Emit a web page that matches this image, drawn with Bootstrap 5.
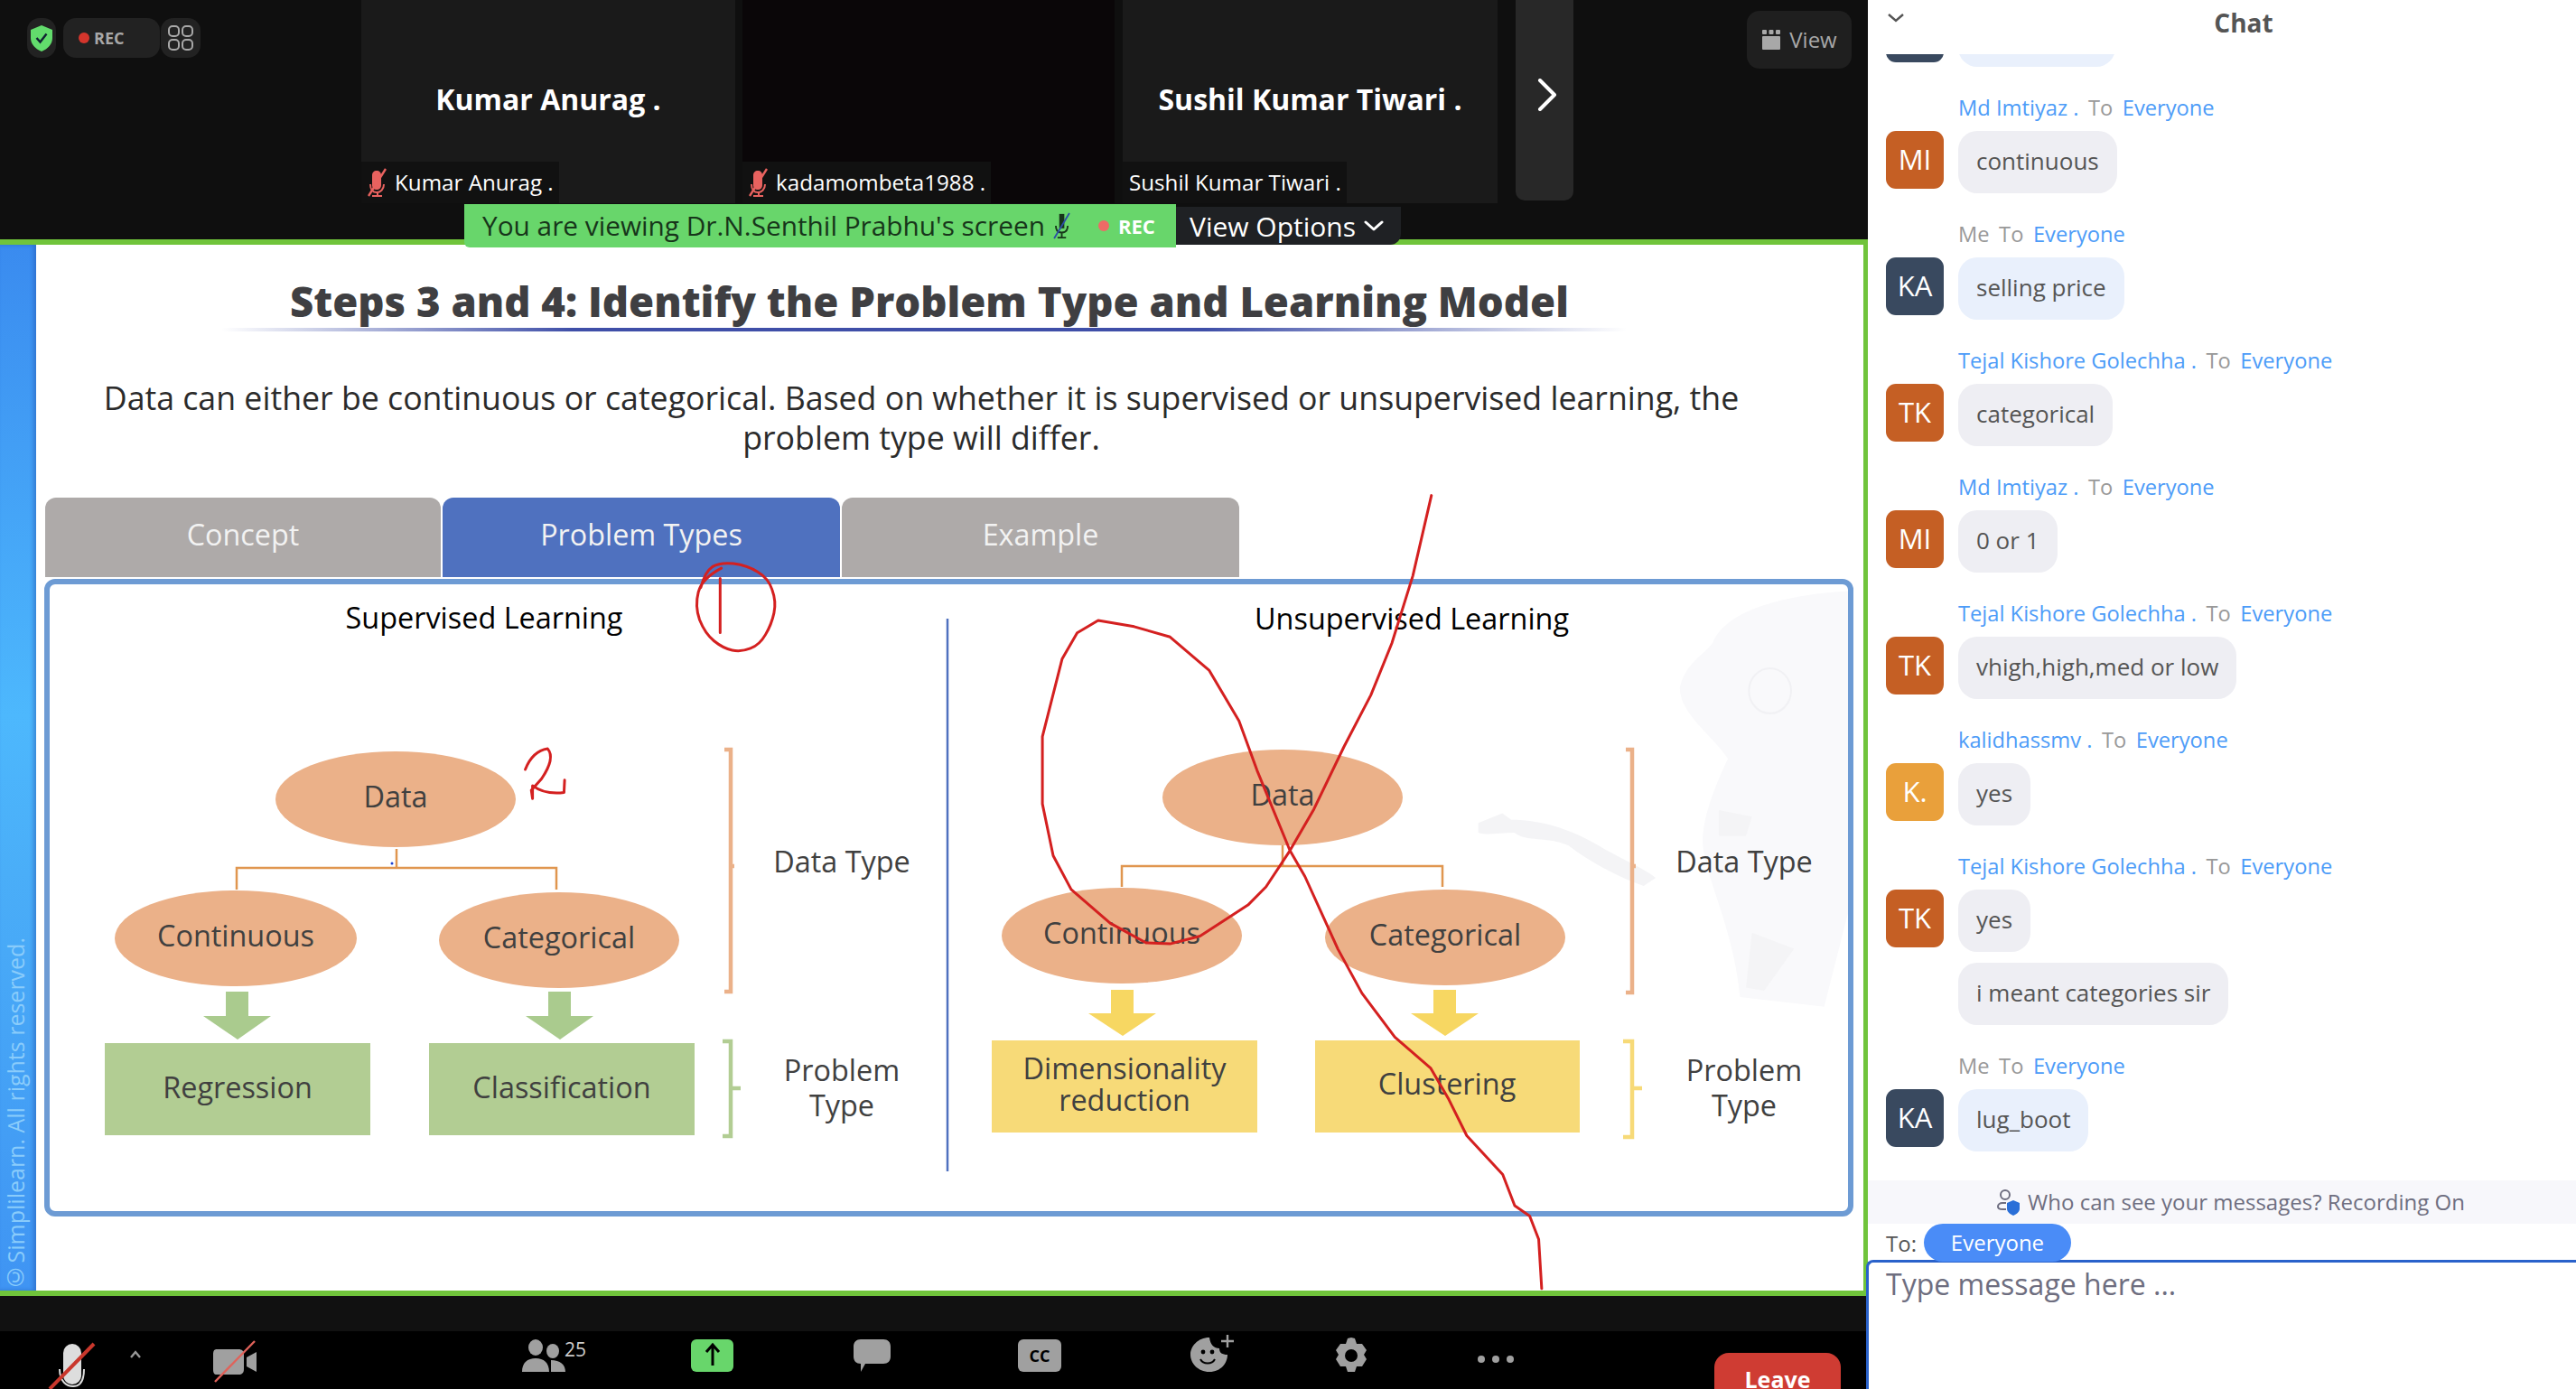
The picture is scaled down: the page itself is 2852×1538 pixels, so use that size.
<!DOCTYPE html>
<html lang="en">
<head>
    <meta charset="UTF-8">
    <meta name="viewport" content="width=device-width, initial-scale=1.0">
    <title>Meeting</title>
    <link href="https://cdn.jsdelivr.net/npm/bootstrap@5.3.3/dist/css/bootstrap.min.css" rel="stylesheet">
    <style>
        html, body { height: 100%; }
        body { font-family: "Open Sans", "Liberation Sans", sans-serif; overflow: hidden; background: #fff; }
        .meet-col { width: 2068px; height: 1538px; flex: none; }

        /* top strip */
        .top-strip { height: 265px; background: #0f0f0f; flex: none; }
        .status-area { width: 400px; padding: 20px 0 0 30px; gap: 1px; flex: none; }
        .pill { height: 44px; background: #222; border-radius: 14px; }
        .pill-shield { width: 32px; margin-right: 7px; }
        .pill-rec { width: 107px; color: #a8a8a8; font-size: 18px; font-weight: 700; gap: 5px; padding-left: 17px; }
        .rec-dot { width: 12px; height: 12px; border-radius: 50%; background: #d4352c; }
        .pill-grid { width: 44px; }
        .tile { height: 225px; background: #1a1a1a; flex: none; }
        .tile-a { width: 414px; margin-right: 8px; }
        .tile-b { width: 412px; margin-right: 9px; background: #0a0608; }
        .tile-c { width: 415px; margin-right: 20px; }
        .tile-name { color: #fff; font-size: 32px; font-weight: 700; height: 179px; padding-top: 40px; }
        .name-tag { height: 46px; background: #111; color: #fff; font-size: 24.2px; padding: 0 6px 0 7px; gap: 9px; }
        .next-panel { width: 64px; height: 222px; background: #282828; border-radius: 0 0 10px 10px; flex: none; padding: 0 0 12px 6px; }
        .view-btn { width: 116px; height: 64px; margin: 12px 18px 0 auto; background: #1f1f1f; border-radius: 14px; color: #a8a8a8; font-size: 24px; gap: 9px; }

        /* share banner lies over the green frame */
        .share-banner { left: 514px; top: 226px; height: 48px; z-index: 3; }
        .banner-green { width: 788px; background: #68d66b; color: #17351a; font-size: 29.8px; border-radius: 0 0 0 6px; padding-left: 20px; gap: 8px; }
        .banner-rec { color: #fff; font-size: 22px; font-weight: 700; gap: 10px; margin-left: 21px; }
        .banner-dot { width: 12px; height: 12px; border-radius: 50%; background: #ee6a66; }
        .view-options { width: 249px; height: 42px; margin-top: 3px; background: #1f2124; color: #fff; font-size: 30px; padding-left: 15px; gap: 9px; border-radius: 0 0 12px 0; }

        /* shared slide */
        .share-frame { border-top: 6px solid #70c43b; border-bottom: 6px solid #70c43b; border-right: 5px solid #70c43b; height: 1170px; flex: none; }
        .side-strip { width: 40px; flex: none; background: linear-gradient(180deg, #3a8bef 0%, #4db8fd 45%, #4aaef8 60%, #3f94f3 100%); box-shadow: inset -3px 0 4px rgba(30, 80, 170, .45); }
        .side-strip span { writing-mode: vertical-rl; transform: rotate(180deg); color: #8accfb; font-size: 25px; white-space: nowrap; line-height: 34px; margin-bottom: -3px; }
        .slide-title-wrap { width: 1556px; margin: 34px 0 0 205px; }
        .slide-title { color: #3f3f42; font-size: 45.5px; font-weight: 800; margin: 0 0 2px 12px; line-height: 56px; font-family: "Open Sans", sans-serif; }
        .title-rule { height: 4px; background: linear-gradient(90deg, rgba(63, 79, 168, 0), #3f4fa8 25%, #3f4fa8 70%, rgba(63, 79, 168, 0)); }
        .slide-text { width: 1860px; margin: 51px 0 0 50px; color: #2b2b2b; font-size: 35.7px; line-height: 44px; }
        .slide-tabs { margin: 45px 0 0 10px; gap: 2px; }
        .slide-tab { width: 440px; height: 88px; padding-bottom: 8px; background: #aeaaa9; color: #f2f2f2; font-size: 32.3px; border-radius: 12px 12px 0 0; }
        .slide-tab:first-child { width: 438px; }
        .slide-tab-on { background: #4f71bf; }
        .slide-panel { width: 2003px; height: 706px; margin: 2px 0 0 9px; border: 6px solid #6d9bd4; border-radius: 12px; overflow: hidden; }
        .slide-panel svg { display: block; }
        .dg-text { font-family: "Open Sans", sans-serif; font-size: 32.4px; fill: #404040; text-anchor: middle; }
        .dg-head { fill: #000; }
        .ink-layer { left: 0; top: 0; z-index: 2; pointer-events: none; }

        /* bottom */
        .dark-gap { height: 39px; background: #111; flex: none; }
        .tool-bar { height: 64px; background: #000; flex: none; overflow: hidden; }
        .leave-btn { left: 1898px; top: 24px; width: 140px; height: 40px; background: #cf3c33; color: #fff; font-size: 25px; line-height: 22px; font-weight: 700; border-radius: 16px 16px 0 0; padding-top: 18px; text-align: center; }
        .tool-icon { top: 0; left: 0; }
        .people-count { left: 625px; top: 5px; color: #ccc; font-size: 21px; }
        .cc-label { left: 1127px; top: 16px; width: 48px; text-align: center; color: #000; font-size: 18px; font-weight: 700; line-height: 22px; }

        /* chat */
        .chat-col { width: 784px; height: 1538px; flex: none; }
        .chat-top { height: 60px; flex: none; color: #555; font-size: 28px; line-height: 50px; font-weight: 700; padding-left: 48px; }
        .chat-chevron { left: 22px; top: 14px; }
        .chat-list { flex: 1 1 0; min-height: 0; padding: 0 0 32px 20px; }
        .chat-msg { flex: none; }
        .msg-head { height: 71px; padding: 0 0 12px 80px; gap: 10.5px; font-size: 23.7px; line-height: 28px; color: #999; }
        .msg-name { color: #4d9cf8; }
        .msg-avatar { width: 64px; height: 64px; border-radius: 11px; color: #fff; font-size: 31px; margin-right: 16px; flex: none; padding-bottom: 2px; }
        .av-ka { background: #39495f; }
        .av-mi, .av-tk { background: #c55f24; }
        .av-k { background: #e9a03b; }
        .msg-bubble { height: 69px; padding: 0 20px 2px; background: #eeeef3; border-radius: 21px; color: #555; font-size: 26px; }
        .msg-mine { background: #e9f0fc; }
        .msg-cut { width: 174px; }
        .msg-extra { margin: 12px 0 0 80px; width: fit-content; }
        .who-bar { height: 48px; background: #f7f7fb; color: #6e6e80; font-size: 24px; gap: 8px; flex: none; padding-left: 18px; }
        .to-row { height: 40px; padding-left: 20px; color: #555; font-size: 24px; gap: 8px; flex: none; }
        .to-pill { width: 163px; height: 42px; background: #4a8cf7; color: #fff; border-radius: 21px; position: relative; z-index: 1; }
        .msg-input { height: 143px; flex: none; margin-left: -2px; border: 3px solid #2a62cb; border-right: 0; border-bottom: 0; border-radius: 8px 0 0 0; padding: 2px 0 0 19px; color: #6e6e80; font-size: 32px; line-height: 44px; background: #fff; position: relative; }
    </style>
</head>
<body class="d-flex">
    <div class="meet-col d-flex flex-column position-relative">
        <div class="top-strip d-flex">
            <div class="status-area d-flex align-items-start">
                <div class="pill pill-shield d-flex align-items-center justify-content-center">
                    <svg width="26" height="30" viewBox="0 0 26 30"><path d="M13 1 25 6v9c0 7-5 12-12 15C6 27 1 22 1 15V6z" fill="#62dc6c"/><path d="M7.5 15l4 4.5 7-9" fill="none" stroke="#123" stroke-width="2.4"/></svg>
                </div>
                <div class="pill pill-rec d-flex align-items-center"><span class="rec-dot"></span>REC</div>
                <div class="pill pill-grid d-flex align-items-center justify-content-center">
                    <svg width="30" height="30" viewBox="0 0 30 30" fill="none" stroke="#a8a8a8" stroke-width="2"><rect x="2" y="2" width="11" height="11" rx="4"/><rect x="17" y="2" width="11" height="11" rx="4"/><rect x="2" y="17" width="11" height="11" rx="4"/><rect x="17" y="17" width="11" height="11" rx="4"/></svg>
                </div>
            </div>
            <div class="tile tile-a d-flex flex-column">
                <div class="tile-name d-flex justify-content-center align-items-center">Kumar Anurag .</div>
                <div class="name-tag d-flex align-items-center align-self-start">
                    <svg width="21" height="32" viewBox="0 0 21 32"><use href="#muted-mic"/></svg>Kumar Anurag .
                </div>
            </div>
            <div class="tile tile-b d-flex flex-column justify-content-end">
                <div class="name-tag d-flex align-items-center align-self-start">
                    <svg width="21" height="32" viewBox="0 0 21 32"><use href="#muted-mic"/></svg>kadamombeta1988 .
                </div>
            </div>
            <div class="tile tile-c d-flex flex-column">
                <div class="tile-name d-flex justify-content-center align-items-center">Sushil Kumar Tiwari .</div>
                <div class="name-tag d-flex align-items-center align-self-start">Sushil Kumar Tiwari .</div>
            </div>
            <div class="next-panel d-flex align-items-center justify-content-center">
                <svg width="24" height="36" viewBox="0 0 24 36" fill="none" stroke="#fff" stroke-width="4" stroke-linecap="round" stroke-linejoin="round"><path d="M4 2l16 16L4 34"/></svg>
            </div>
            <div class="view-btn d-flex align-items-center justify-content-center">
                <svg width="22" height="22" viewBox="0 0 22 22" fill="#a8a8a8"><rect x="1" y="0" width="5" height="5" rx="1"/><rect x="8.5" y="0" width="5" height="5" rx="1"/><rect x="16" y="0" width="5" height="5" rx="1"/><rect x="1" y="7" width="20" height="15" rx="1"/></svg>View
            </div>
        </div>

        <div class="share-banner position-absolute d-flex align-items-start">
            <div class="banner-green h-100 d-flex align-items-center">
                You are viewing Dr.N.Senthil Prabhu's screen
                <svg width="22" height="30" viewBox="0 0 21 32"><path d="M7 2h6v17H7z" fill="#17351a"/><path d="M3 16c0 6 3 8 7 8s7-2 7-8M10 24v5M5 30h10" fill="none" stroke="#17351a" stroke-width="2"/><path d="M1 31 19 1" stroke="#2c4fa5" stroke-width="2"/></svg>
                <span class="banner-rec d-flex align-items-center"><span class="banner-dot"></span>REC</span>
            </div>
            <div class="view-options d-flex align-items-center">
                View Options
                <svg width="22" height="14" viewBox="0 0 22 14" fill="none" stroke="#fff" stroke-width="3" stroke-linecap="round" stroke-linejoin="round"><path d="M2 3l9 8 9-8"/></svg>
            </div>
        </div>

        <div class="share-frame d-flex">
            <div class="side-strip d-flex flex-column justify-content-end align-items-start">
                <span>©Simplilearn. All rights reserved.</span>
            </div>
            <div class="flex-grow-1 bg-white">
                <div class="slide-title-wrap text-center">
                    <h1 class="slide-title">Steps 3 and 4: Identify the Problem Type and Learning Model</h1>
                    <div class="title-rule"></div>
                </div>
                <p class="slide-text text-center mb-0">Data can either be continuous or categorical. Based on whether it is supervised or unsupervised learning, the problem type will differ.</p>
                <div class="slide-tabs d-flex">
                    <div class="slide-tab d-flex align-items-center justify-content-center">Concept</div>
                    <div class="slide-tab slide-tab-on d-flex align-items-center justify-content-center">Problem Types</div>
                    <div class="slide-tab d-flex align-items-center justify-content-center">Example</div>
                </div>
                <div class="slide-panel">
                    <svg width="1991" height="694" viewBox="55 647 1991 694">
                        <!-- faint robot behind the right half -->
                        <g transform="translate(1620 640) scale(.333 .357)">
                            <path fill="#f9f9fb" d="M830 200C880 90 1100 50 1290 40V1000L1200 1330 920 1300C900 1100 820 960 800 850 780 760 850 620 880 560 820 480 720 420 720 340 740 260 800 240 830 200z"/>
                            <path fill="#f4f4f6" d="M50 760 130 730 160 750C260 750 360 780 450 830 520 870 600 900 640 930L600 955C520 930 420 880 350 830 280 800 210 820 170 790 120 790 80 800 50 790z"/>
                            <circle cx="1020" cy="350" r="70" fill="none" stroke="#f1f1f4" stroke-width="6"/>
                            <path fill="#f4f4f6" d="M850 720 960 740 940 800 850 800zM960 1100 1100 1150 1000 1280 940 1270z"/>
                        </g>
                        <!-- supervised -->
                        <text class="dg-text dg-head" x="536" y="696">Supervised Learning</text>
                        <path d="M439 940v21M262 985v-24h354v24" fill="none" stroke="#e0964f" stroke-width="2.5"/>
                        <ellipse cx="438" cy="885" rx="133" ry="53" fill="#ebb189"/>
                        <ellipse cx="261" cy="1039" rx="134" ry="53" fill="#ebb189"/>
                        <ellipse cx="619" cy="1041" rx="133" ry="53" fill="#ebb189"/>
                        <text class="dg-text" x="438" y="894">Data</text>
                        <text class="dg-text" x="261" y="1048">Continuous</text>
                        <text class="dg-text" x="619" y="1050">Categorical</text>
                        <path d="M250 1098h25v27h25l-37 26-38-26h25zM607 1098h25v27h25l-37 26-38-26h25z" fill="#aacb8e"/>
                        <rect x="116" y="1155" width="294" height="102" fill="#b2cd93"/>
                        <rect x="475" y="1155" width="294" height="102" fill="#b2cd93"/>
                        <text class="dg-text" x="263" y="1216">Regression</text>
                        <text class="dg-text" x="622" y="1216">Classification</text>
                        <path d="M802 830h7v268h-7M809 959h4" fill="none" stroke="#ebb189" stroke-width="4.5"/>
                        <path d="M800 1153h9v105h-9M809 1205h11" fill="none" stroke="#b2cd93" stroke-width="4.5"/>
                        <text class="dg-text" x="932" y="966">Data Type</text>
                        <text class="dg-text" y="1197"><tspan x="932">Problem</tspan><tspan x="932" dy="39">Type</tspan></text>
                        <path d="M1049 685v612" stroke="#4f71bf" stroke-width="2.5"/>
                        <!-- unsupervised -->
                        <text class="dg-text dg-head" x="1563" y="697">Unsupervised Learning</text>
                        <path d="M1420 936v23M1242 982v-23h355v23" fill="none" stroke="#e0964f" stroke-width="2.5"/>
                        <ellipse cx="1420" cy="883" rx="133" ry="53" fill="#ebb189"/>
                        <ellipse cx="1242" cy="1036" rx="133" ry="53" fill="#ebb189"/>
                        <ellipse cx="1600" cy="1038" rx="133" ry="53" fill="#ebb189"/>
                        <text class="dg-text" x="1420" y="892">Data</text>
                        <text class="dg-text" x="1242" y="1045">Continuous</text>
                        <text class="dg-text" x="1600" y="1047">Categorical</text>
                        <path d="M1230 1096h25v26h25l-37 25-38-25h25zM1587 1096h25v26h25l-37 25-38-25h25z" fill="#f7d762"/>
                        <rect x="1098" y="1152" width="294" height="102" fill="#f7da78"/>
                        <rect x="1456" y="1152" width="293" height="102" fill="#f7da78"/>
                        <text class="dg-text" y="1195"><tspan x="1245">Dimensionality</tspan><tspan x="1245" dy="35">reduction</tspan></text>
                        <text class="dg-text" x="1602" y="1212">Clustering</text>
                        <path d="M1800 830h7v269h-7M1807 959h4" fill="none" stroke="#ebb189" stroke-width="4.5"/>
                        <path d="M1797 1153h10v106h-10M1807 1205h11" fill="none" stroke="#f7da78" stroke-width="4.5"/>
                        <text class="dg-text" x="1931" y="966">Data Type</text>
                        <text class="dg-text" y="1197"><tspan x="1931">Problem</tspan><tspan x="1931" dy="39">Type</tspan></text>
                    </svg>
                </div>
            </div>
        </div>

        <!-- presenter's annotations -->
        <svg class="ink-layer position-absolute" width="2068" height="1538" viewBox="0 0 2068 1538" fill="none" stroke="#d42020" stroke-width="3" stroke-linejoin="round" stroke-linecap="round">
            <g transform="translate(1030 540) scale(.6636 .574)">
                <path vector-effect="non-scaling-stroke" d="M836 15 805 170 770 300 735 400 690 500 640 620 600 700 560 770 530 805 450 865 400 880 360 878 300 840 235 775 205 710 187 610 187 480 220 330 245 280 280 256 340 268 400 288 465 352 515 450 545 545 600 700 625 750 680 890 720 975 775 1060 835 1120 865 1180 895 1250 955 1325 975 1385 1000 1405 1015 1450 1020 1545"/>
            </g>
            <g transform="translate(0 620) scale(.67 .51)">
                <path vector-effect="non-scaling-stroke" d="M1192 18Q1160 40 1154 70 1148 100 1156 130 1165 160 1180 176 1195 192 1210 196 1225 200 1240 192 1255 185 1265 162 1275 140 1279 115 1283 90 1276 65 1270 40 1252 26 1235 12 1212 8 1190 5 1177 15 1165 25 1158 60M1190 40V158"/>
                <path vector-effect="non-scaling-stroke" d="M868 455Q880 415 905 410 918 430 895 475L878 500 880 518 880 490Q900 510 932 505L933 478"/>
            </g>
            <circle cx="434" cy="956" r="1.5" fill="#1a3fd0" stroke="none"/>
        </svg>

        <div class="dark-gap"></div>
        <div class="tool-bar position-relative">
            <svg class="tool-icon position-absolute" width="1800" height="64" viewBox="0 1474 1800 64">
                <!-- mic -->
                <rect x="70" y="1488" width="20" height="45" rx="10" fill="#ddd"/>
                <path d="M66 1516c0 14 8 19 15 19s12-5 12-19" fill="none" stroke="#ddd" stroke-width="2"/>
                <path d="M55 1538 104 1488" stroke="#c9372c" stroke-width="4"/>
                <path d="M145 1503l5-6 5 6" fill="none" stroke="#999" stroke-width="2.4"/>
                <!-- camera -->
                <path d="M240 1494h24c4 0 6 2 6 6v16c0 4-2 6-6 6h-24c-3 0-4-2-4-6v-16c0-4 1-6 4-6zM284 1497v22l-11-6v-10z" fill="#a0a0a0"/>
                <path d="M238 1530 282 1485" stroke="#e0625a" stroke-width="2.4"/>
                <!-- participants -->
                <g fill="#a0a0a0">
                    <ellipse cx="593" cy="1492" rx="8" ry="9"/>
                    <ellipse cx="612" cy="1496" rx="7" ry="8"/>
                    <path d="M578 1519c0-10 6-15 15-15s15 5 15 15zM610 1506c10 0 16 5 16 13h-16z"/>
                </g>
                <!-- share -->
                <rect x="765" y="1483" width="47" height="36" rx="6" fill="#68d66b"/>
                <path d="M789 1512v-22M782 1497l7-8 7 8" fill="none" stroke="#000" stroke-width="3"/>
                <!-- chat -->
                <path d="M953 1483h25c5 0 8 3 8 8v11c0 5-3 8-8 8h-20l-5 9v-9c-5 0-8-3-8-8v-11c0-5 3-8 8-8z" fill="#a0a0a0"/>
                <!-- cc -->
                <rect x="1127" y="1483" width="48" height="36" rx="6" fill="#a0a0a0"/>
                <!-- reactions -->
                <path d="M1339 1481c-13 0-21 10-21 19s8 19 21 19 20-10 20-19c-6 0-9-2-9-7-6 0-10-4-11-12z" fill="#a0a0a0"/>
                <circle cx="1332" cy="1497" r="2.4" fill="#000"/><circle cx="1342" cy="1497" r="2.4" fill="#000"/>
                <path d="M1329 1505c3 6 13 6 16 0" fill="none" stroke="#000" stroke-width="2"/>
                <path d="M1352 1485h14M1359 1478v14" stroke="#a0a0a0" stroke-width="2.4"/>
                <!-- gear -->
                <path d="M1496 1481l4 1 2 6 6 0 5 7-3 5 3 5-5 8-6 0-2 6-8 0-2-6-6 0-5-8 3-5-3-5 5-7 6 0 2-6z" fill="#a0a0a0"/>
                <circle cx="1496" cy="1501" r="7" fill="#000"/>
                <!-- more -->
                <g fill="#a0a0a0"><circle cx="1640" cy="1505" r="4"/><circle cx="1656" cy="1505" r="4"/><circle cx="1672" cy="1505" r="4"/></g>
            </svg>
            <span class="people-count position-absolute">25</span>
            <span class="position-absolute cc-label">CC</span>
            <div class="leave-btn position-absolute">Leave</div>
        </div>
    </div>

    <div class="chat-col d-flex flex-column bg-white">
        <div class="chat-top position-relative text-center">
            <svg class="chat-chevron position-absolute" width="18" height="12" viewBox="0 0 18 12" fill="none" stroke="#555" stroke-width="2.4"><path d="M1 2l8 7 8-7"/></svg>
            Chat
        </div>
        <div class="chat-list d-flex flex-column justify-content-end overflow-hidden">
            <div class="chat-msg">
                <div class="d-flex"><div class="msg-avatar av-ka"></div><div class="msg-bubble msg-mine msg-cut"></div></div>
            </div>
            <div class="chat-msg">
                <div class="msg-head d-flex align-items-end"><span class="msg-name">Md Imtiyaz .</span><span>To</span><span class="msg-name">Everyone</span></div>
                <div class="d-flex"><div class="msg-avatar av-mi d-flex align-items-center justify-content-center">MI</div><div class="msg-bubble d-flex align-items-center">continuous</div></div>
            </div>
            <div class="chat-msg">
                <div class="msg-head d-flex align-items-end"><span>Me</span><span>To</span><span class="msg-name">Everyone</span></div>
                <div class="d-flex"><div class="msg-avatar av-ka d-flex align-items-center justify-content-center">KA</div><div class="msg-bubble msg-mine d-flex align-items-center">selling price</div></div>
            </div>
            <div class="chat-msg">
                <div class="msg-head d-flex align-items-end"><span class="msg-name">Tejal Kishore Golechha .</span><span>To</span><span class="msg-name">Everyone</span></div>
                <div class="d-flex"><div class="msg-avatar av-tk d-flex align-items-center justify-content-center">TK</div><div class="msg-bubble d-flex align-items-center">categorical</div></div>
            </div>
            <div class="chat-msg">
                <div class="msg-head d-flex align-items-end"><span class="msg-name">Md Imtiyaz .</span><span>To</span><span class="msg-name">Everyone</span></div>
                <div class="d-flex"><div class="msg-avatar av-mi d-flex align-items-center justify-content-center">MI</div><div class="msg-bubble d-flex align-items-center">0 or 1</div></div>
            </div>
            <div class="chat-msg">
                <div class="msg-head d-flex align-items-end"><span class="msg-name">Tejal Kishore Golechha .</span><span>To</span><span class="msg-name">Everyone</span></div>
                <div class="d-flex"><div class="msg-avatar av-tk d-flex align-items-center justify-content-center">TK</div><div class="msg-bubble d-flex align-items-center">vhigh,high,med or low</div></div>
            </div>
            <div class="chat-msg">
                <div class="msg-head d-flex align-items-end"><span class="msg-name">kalidhassmv .</span><span>To</span><span class="msg-name">Everyone</span></div>
                <div class="d-flex"><div class="msg-avatar av-k d-flex align-items-center justify-content-center">K.</div><div class="msg-bubble d-flex align-items-center">yes</div></div>
            </div>
            <div class="chat-msg">
                <div class="msg-head d-flex align-items-end"><span class="msg-name">Tejal Kishore Golechha .</span><span>To</span><span class="msg-name">Everyone</span></div>
                <div class="d-flex"><div class="msg-avatar av-tk d-flex align-items-center justify-content-center">TK</div><div class="msg-bubble d-flex align-items-center">yes</div></div>
                <div class="msg-bubble msg-extra d-flex align-items-center">i meant categories sir</div>
            </div>
            <div class="chat-msg">
                <div class="msg-head d-flex align-items-end"><span>Me</span><span>To</span><span class="msg-name">Everyone</span></div>
                <div class="d-flex"><div class="msg-avatar av-ka d-flex align-items-center justify-content-center">KA</div><div class="msg-bubble msg-mine d-flex align-items-center">lug_boot</div></div>
            </div>
        </div>
        <div class="who-bar d-flex align-items-center justify-content-center">
            <svg width="28" height="30" viewBox="0 0 28 30"><circle cx="11" cy="7" r="5" fill="none" stroke="#6e6e80" stroke-width="2"/><path d="M12 16H8c-3 0-5 2-5 4s2 3 5 3h4" fill="none" stroke="#6e6e80" stroke-width="2"/><path d="M20 13l7 3v6c0 4-3 6-7 8-4-2-7-4-7-8v-6z" fill="#2a6fd8"/></svg>
            Who can see your messages? Recording On
        </div>
        <div class="to-row d-flex align-items-start"><span class="pt-1">To:</span><div class="to-pill d-flex align-items-center justify-content-center">Everyone</div></div>
        <div class="msg-input">Type message here ...</div>
    </div>

    <svg width="0" height="0" class="position-absolute">
        <symbol id="muted-mic" viewBox="0 0 21 32">
            <path d="M10 3c3 0 5 2 5 5v11c0 3-2 5-5 5s-5-2-5-5V8c0-3 2-5 5-5z" fill="#e8625f"/>
            <path d="M3 18c0 6 3 9 7 9s8-3 8-9M11 27v3M5 31h11" fill="none" stroke="#e8625f" stroke-width="2"/>
            <path d="M1 31 20 1" stroke="#e8625f" stroke-width="2.4"/>
        </symbol>
    </svg>
</body>
</html>
